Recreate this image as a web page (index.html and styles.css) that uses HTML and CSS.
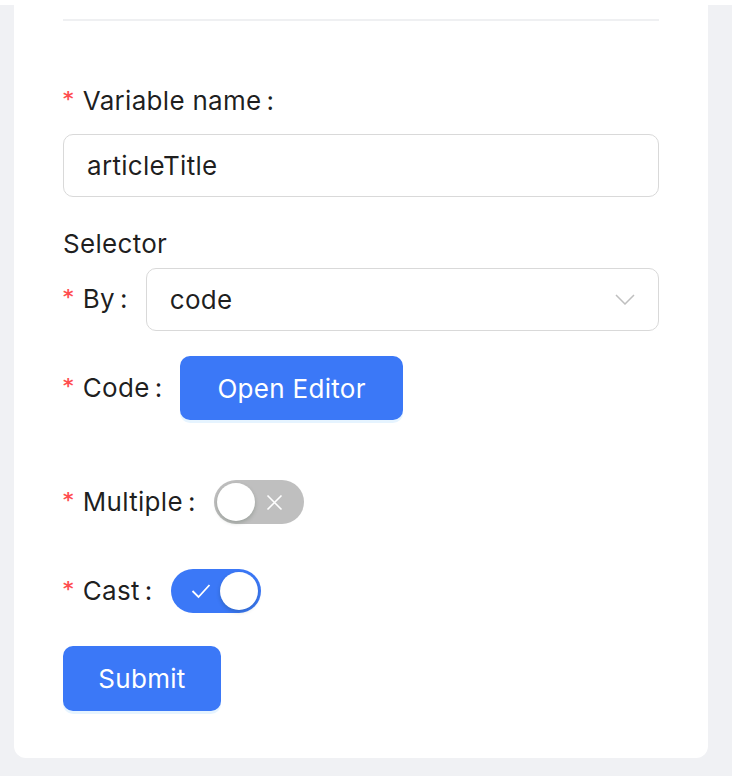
FILE: index.html
```html
<!DOCTYPE html>
<html lang="en">
<head>
<meta charset="utf-8">
<title>Form</title>
<link rel="stylesheet" href="styles.css">
</head>
<body>
<div class="topbar"></div>
<div class="card">
  <div class="divider"></div>
  <form class="form">
    <div class="label label-top"><span class="req">*</span>Variable name<span class="colon">:</span></div>
    <div class="input">articleTitle</div>

    <div class="section">Selector</div>
    <div class="row row-by">
      <div class="label"><span class="req">*</span>By<span class="colon">:</span></div>
      <div class="select">
        <span>code</span>
        <svg class="chev" width="20" height="11" viewBox="0 0 20 11"><path d="M1 1 L10 10 L19 1" fill="none" stroke="#bfbfbf" stroke-width="1.5"/></svg>
      </div>
    </div>

    <div class="row row-code">
      <div class="label"><span class="req">*</span>Code<span class="colon">:</span></div>
      <button type="button" class="btn btn-editor">Open Editor</button>
    </div>

    <div class="row row-multi">
      <div class="label"><span class="req">*</span>Multiple<span class="colon">:</span></div>
      <div class="switch off">
        <span class="knob"></span>
        <svg class="sw-icon" width="17" height="17" viewBox="0 0 17 17"><path d="M1.5 1.5 L15.5 15.5 M15.5 1.5 L1.5 15.5" stroke="#fff" stroke-width="1.6" fill="none"/></svg>
      </div>
    </div>

    <div class="row row-cast">
      <div class="label"><span class="req">*</span>Cast<span class="colon">:</span></div>
      <div class="switch on">
        <svg class="sw-icon" width="20" height="16" viewBox="0 0 20 16"><path d="M1.5 8 L7.5 14 L18.5 2" stroke="#fff" stroke-width="1.8" fill="none"/></svg>
        <span class="knob"></span>
      </div>
    </div>

    <button type="button" class="btn btn-submit">Submit</button>
  </form>
</div>
</body>
</html>
```

FILE: styles.css
```css
* { box-sizing: border-box; }
html, body { margin: 0; padding: 0; }
body {
  background: #f0f1f4;
  font-family: Inter, "Noto Sans", "Liberation Sans", sans-serif;
  color: rgba(0, 0, 0, 0.88);
  font-size: 26px;
  letter-spacing: 0.3px;
  width: 732px;
  height: 776px;
  overflow: hidden;
}
.topbar { height: 5px; background: #fff; }
.card {
  background: #fff;
  margin: 0 24px 0 14px;
  padding: 14px 49px 47px;
  border-radius: 0 0 12px 12px;
}
.divider { height: 2px; background: #eff0f2; }
.form { display: flex; flex-direction: column; align-items: flex-start; }
.label {
  display: flex;
  align-items: center;
  white-space: nowrap;
  line-height: 36px;
  height: 36px;
}
.req { color: #ff4d4f; font-size: 20px; font-weight: bold; margin-right: 9px; font-family: "DejaVu Sans", sans-serif; position: relative; top: -3px; }
.colon { margin-left: 5px; margin-right: 18px; }
.label-top { margin-top: 62px; }
.input {
  margin-top: 15px;
  width: 596px;
  height: 63px;
  border: 1.5px solid #d9d9d9;
  border-radius: 10px;
  padding: 0 23px;
  display: flex;
  align-items: center;
}
.section { margin-top: 29px; line-height: 36px; height: 36px; }
.row { display: flex; align-items: center; height: 64px; }
.row-by { margin-top: 5px; width: 596px; }
.select {
  flex: 1;
  height: 63px;
  border: 1.5px solid #d9d9d9;
  border-radius: 10px;
  padding: 0 23px 0 23px;
  display: flex;
  align-items: center;
  justify-content: space-between;
}
.row-code { margin-top: 25px; }
.btn {
  font-family: inherit;
  font-size: 26px;
  letter-spacing: 0.3px;
  color: #fff;
  background: #3b78f7;
  border: none;
  border-radius: 10px;
  box-shadow: 0 3px 0 rgba(5, 145, 255, 0.1);
  cursor: pointer;
}
.btn-editor { height: 64px; padding: 0 37px; }
.row-multi { margin-top: 50px; }
.row-cast { margin-top: 25px; }
.switch {
  width: 90px;
  height: 44px;
  border-radius: 22px;
  display: flex;
  align-items: center;
  padding: 0 3px;
}
.switch.off { background: #bfbfbf; }
.switch.on { background: #3b78f7; justify-content: space-between; padding-left: 20px; }
.knob {
  width: 38px;
  height: 38px;
  border-radius: 50%;
  background: #fff;
  box-shadow: 0 2px 4px rgba(0, 35, 11, 0.2);
}
.switch.off .sw-icon { margin-left: 11px; }
.btn-submit { margin-top: 23px; width: 158px; height: 65px; }
```
